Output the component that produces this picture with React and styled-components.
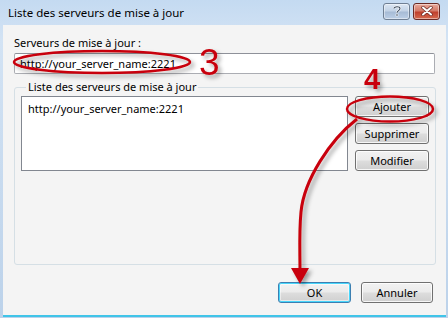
import styled, { createGlobalStyle } from "styled-components";

const GlobalStyle = createGlobalStyle`
  html, body {
    margin: 0;
    padding: 0;
    background: #ffffff;
  }
  body {
    font-family: "Noto Sans", "Liberation Sans", sans-serif;
    font-size: 11px;
    color: #000;
  }
`;

const Window = styled.div`
  position: relative;
  width: 448px;
  height: 318px;
  box-sizing: border-box;
  display: flex;
  flex-direction: column;
  background: linear-gradient(180deg, #c4daf1 0%, #d3e3f4 40px, #bcd2ea 100%);
  padding: 0 2px 1px 3px;
  overflow: hidden;
`;

const TitleBar = styled.div`
  height: 25px;
  display: flex;
  align-items: center;
  padding-left: 5px;
  padding-right: 6px;
`;

const Title = styled.span`
  flex: 1;
  font-size: 11.5px;
  color: #000;
  margin-top: -1px;
`;

const CaptionButton = styled.div`
  width: 27px;
  height: 17px;
  box-sizing: border-box;
  border: 1px solid ${(p) => (p.$close ? "#6a2a25" : "#6f7f93")};
  border-radius: 3px;
  margin-left: 3px;
  margin-top: -3px;
  display: flex;
  align-items: center;
  justify-content: center;
  background: ${(p) =>
    p.$close
      ? "linear-gradient(180deg, #e9a99c 0%, #d47a68 45%, #c0402d 55%, #d56a4f 100%)"
      : "linear-gradient(180deg, #dbe6f3 0%, #c3d3e6 45%, #a7bcd6 55%, #bccfe6 100%)"};
  box-shadow: inset 0 0 0 1px rgba(255, 255, 255, 0.45);
`;

const Content = styled.div`
  flex: 1;
  background: #f4f4f4;
  border-bottom: 2px solid #40c4e8;
  padding: 9px 10px 0 11px;
  display: flex;
  flex-direction: column;
`;

const Label = styled.div`
  height: 17px;
  line-height: 17px;
  margin-bottom: 2px;
`;

const Input = styled.div`
  height: 21px;
  box-sizing: border-box;
  border: 1px solid #abadb3;
  border-top-color: #8e9199;
  border-radius: 2px;
  background: #fff;
  padding-left: 5px;
  line-height: 19px;
  margin-right: 1px;
`;

const Group = styled.fieldset`
  margin: 6px 0 0 0;
  padding: 2px 6px 6px 6px;
  border: 1px solid #d5dfe5;
  border-radius: 3px;
  height: 185px;
  box-sizing: border-box;
  display: flex;
  gap: 7px;
`;

const Legend = styled.legend`
  padding: 0 2px;
  margin-left: 5px;
  line-height: 14px;
`;

const ListBox = styled.div`
  width: 327px;
  flex-shrink: 0;
  box-sizing: border-box;
  border: 1px solid #828790;
  background: #fff;
  padding: 4px 6px;
`;

const ListItem = styled.div`
  line-height: 15px;
`;

const SideButtons = styled.div`
  display: flex;
  flex-direction: column;
  gap: 6px;
`;

const Button = styled.div`
  width: ${(p) => p.$w || 74}px;
  height: 21px;
  box-sizing: border-box;
  border: 1px solid ${(p) => (p.$default ? "#3c7fb1" : "#707070")};
  border-radius: 3px;
  display: flex;
  align-items: center;
  justify-content: center;
  background: linear-gradient(180deg, #f2f2f2 0%, #ebebeb 48%, #dddddd 52%, #cfcfcf 100%);
  box-shadow: ${(p) =>
    p.$default
      ? "inset 0 0 0 1px #48d6fb, inset 0 0 0 2px rgba(255,255,255,0.5)"
      : "inset 0 0 0 1px rgba(255,255,255,0.8)"};
`;

const Footer = styled.div`
  display: flex;
  justify-content: flex-end;
  gap: 10px;
  margin-top: 17px;
  padding-right: 3px;
`;

const Overlay = styled.svg`
  position: absolute;
  left: 0;
  top: 0;
  pointer-events: none;
`;

const server = "http://your_server_name:2221";

export default function App() {
  return (
    <>
      <GlobalStyle />
      <Window>
        <TitleBar>
          <Title>Liste des serveurs de mise à jour</Title>
          <CaptionButton>
            <svg width="10" height="12" viewBox="0 0 10 12">
              <path
                d="M2 3.5 C2 1.2 8 1.2 8 3.6 C8 5.6 5 5.6 5 7.8"
                fill="none"
                stroke="#fff"
                strokeWidth="2.4"
              />
              <path
                d="M2 3.5 C2 1.2 8 1.2 8 3.6 C8 5.6 5 5.6 5 7.8"
                fill="none"
                stroke="#3a4a5e"
                strokeWidth="1.1"
              />
              <rect x="4" y="9" width="2" height="2" fill="#3a4a5e" stroke="#fff" strokeWidth="0.6" />
            </svg>
          </CaptionButton>
          <CaptionButton $close>
            <svg width="12" height="10" viewBox="0 0 12 10">
              <path d="M2 1.5 L10 8.5 M10 1.5 L2 8.5" stroke="#6a2a25" strokeWidth="3.4" strokeLinecap="round" />
              <path d="M2 1.5 L10 8.5 M10 1.5 L2 8.5" stroke="#fff" strokeWidth="2" strokeLinecap="round" />
            </svg>
          </CaptionButton>
        </TitleBar>
        <Content>
          <Label>Serveurs de mise à jour :</Label>
          <Input>{server}</Input>
          <Group>
            <Legend>Liste des serveurs de mise à jour</Legend>
            <ListBox>
              <ListItem>{server}</ListItem>
            </ListBox>
            <SideButtons>
              <Button>Ajouter</Button>
              <Button>Supprimer</Button>
              <Button>Modifier</Button>
            </SideButtons>
          </Group>
          <Footer>
            <Button $default $w={73}>OK</Button>
            <Button $w={72}>Annuler</Button>
          </Footer>
        </Content>

        <Overlay width="448" height="318" viewBox="0 0 448 318">
          <defs>
            <filter id="shadow" x="-20%" y="-20%" width="140%" height="140%">
              <feDropShadow dx="3" dy="3" stdDeviation="2" floodColor="#000" floodOpacity="0.35" />
            </filter>
          </defs>
          <g filter="url(#shadow)" stroke="#c8000a" fill="none" strokeWidth="2.5">
            <ellipse cx="102" cy="62" rx="88" ry="11" />
            <ellipse cx="390" cy="109" rx="43" ry="12.5" />
            <path d="M357 119 C 330 140, 304 180, 301 212 C 299 232, 300 250, 300 272" strokeWidth="3" />
          </g>
          <g filter="url(#shadow)" fill="#c8000a">
            <polygon points="291,268 309,268 300,284" />
            <text x="199" y="75" fontFamily="Liberation Sans, sans-serif" fontSize="37">3</text>
            <text x="364" y="89" fontFamily="Liberation Sans, sans-serif" fontSize="29" fontWeight="bold">4</text>
          </g>
        </Overlay>
      </Window>
    </>
  );
}
